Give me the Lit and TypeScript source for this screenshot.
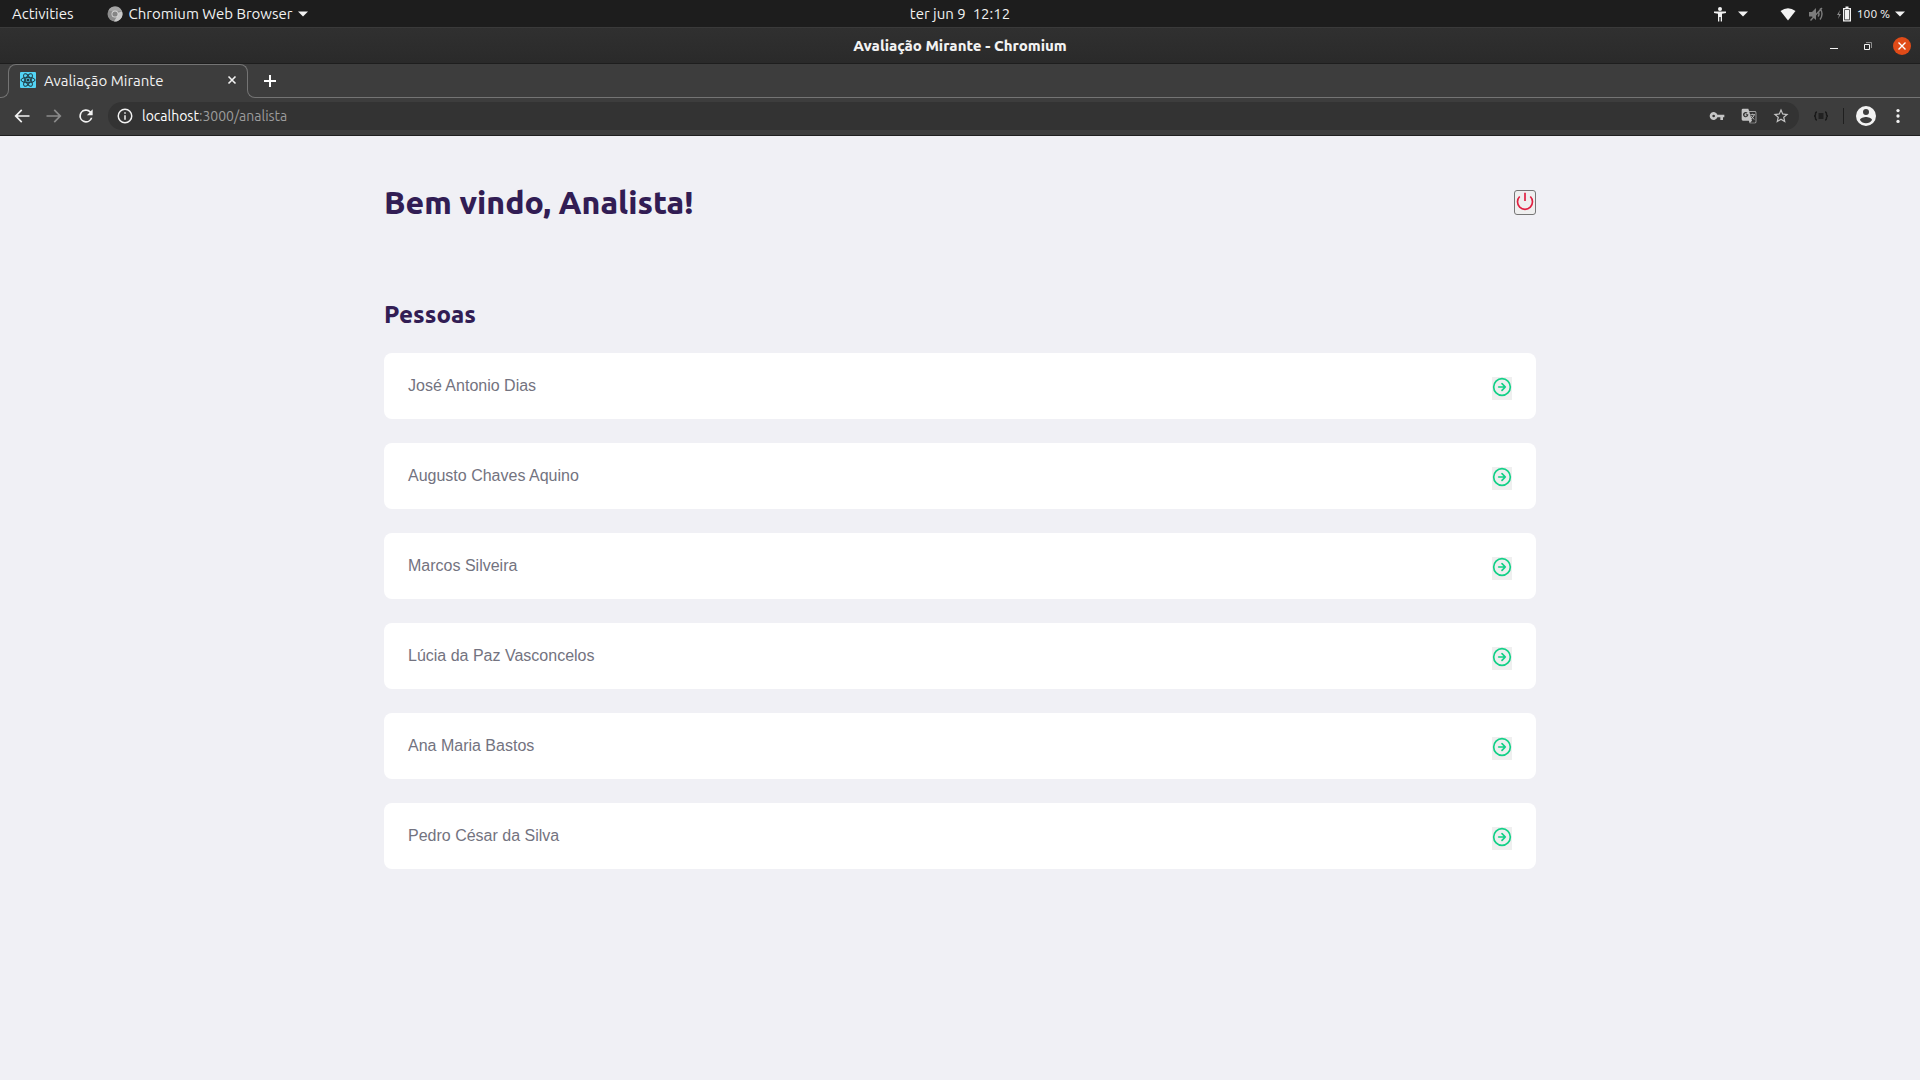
import { LitElement, html, css, svg } from "lit";
import { customElement, property, state } from "lit/decorators.js";

interface Pessoa {
  id: number;
  nome: string;
}

const caret = html`<svg class="caret" viewBox="0 0 10 6" aria-hidden="true"><path d="M0 0.5h10L5 5.5z" /></svg>`;

@customElement("system-bar")
class SystemBar extends LitElement {
  static styles = css`
    :host {
      display: grid;
      grid-template-columns: 1fr auto 1fr;
      align-items: center;
      box-sizing: border-box;
      height: 27px;
      padding: 0 12px;
      background: #1d1d1d;
      color: #f2f2f2;
      font: 15px/27px Ubuntu, "Noto Sans", sans-serif;
    }
    .side {
      display: flex;
      align-items: center;
    }
    .end {
      justify-content: flex-end;
    }
    button {
      display: flex;
      align-items: center;
      margin: 0;
      padding: 0;
      border: 0;
      background: none;
      color: inherit;
      font: inherit;
      white-space: pre;
    }
    .app {
      margin-left: 33px;
      gap: 6px;
    }
    .app svg:first-child {
      width: 16px;
      height: 16px;
    }
    .caret {
      width: 10px;
      height: 6px;
      fill: currentColor;
    }
    .access {
      gap: 10px;
      margin-right: 32px;
    }
    .icon {
      width: 16px;
      height: 16px;
    }
    .status {
      gap: 12px;
      margin-right: 3px;
    }
    .power {
      display: flex;
      align-items: center;
      gap: 5px;
      font-size: 12px;
    }
  `;

  render() {
    return html`
      <div class="side">
        <button type="button">Activities</button>
        <button type="button" class="app">
          <svg viewBox="0 0 16 16" aria-hidden="true">
            <circle cx="8" cy="8" r="7.5" fill="#8c8c8c" />
            <path d="M8 8L15 5.2A7.5 7.5 0 0 1 7 15.4L10.5 9.5z" fill="#c9c9c9" />
            <path d="M1.4 4.6A7.5 7.5 0 0 1 15 5.2H8z" fill="#a5a5a5" />
            <circle cx="8" cy="8" r="3.5" fill="#d6d6d6" />
            <circle cx="8" cy="8" r="2.6" fill="#858585" />
          </svg>
          <span>Chromium Web Browser</span>${caret}
        </button>
      </div>
      <button type="button">ter jun 9  12:12</button>
      <div class="side end">
        <button type="button" class="access" aria-label="Acessibilidade">
          <svg class="icon" viewBox="0 0 16 16" aria-hidden="true" fill="#f2f2f2">
            <circle cx="8" cy="3" r="2" />
            <path d="M2 5.4H14V7L10 7.8V15.500H8.700V11H7.300V15.500H6V7.800L2 7z" />
          </svg>
          ${caret}
        </button>
        <button type="button" class="status" aria-label="Sistema">
          <svg class="icon" viewBox="0 0 16 16" aria-hidden="true">
            <path d="M0.5 5Q8 -0.5 15.5 5L8 14.5z" fill="#f2f2f2" />
          </svg>
          <svg class="icon" viewBox="0 0 16 16" aria-hidden="true" stroke="#7c7c7c" fill="none" stroke-width="1.4">
            <path d="M1 6h3l4-4v12L4 10.500H1z" fill="#7c7c7c" stroke="none" />
            <path d="M10 5.500q2 2.500 0 5M12 2.500q4 5.500 0 11M2.500 14.500L14 2" />
          </svg>
          <span class="power">
            <svg class="icon" viewBox="0 0 16 16" aria-hidden="true">
              <path d="M4 4L1 9h2l-1 4L5 8H3z" fill="#8a8a8a" />
              <path d="M9.500 0.500h3v1.500h2.500v13.500H7V2h2.500z" fill="#f2f2f2" />
              <path d="M8.300 3.300h5.400v11H8.300z" fill="#1d1d1d" />
              <path d="M9 4h4v9.500H9z" fill="#f2f2f2" />
            </svg>
            <span>100 %</span>${caret}
          </span>
        </button>
      </div>
    `;
  }
}

@customElement("browser-chrome")
class BrowserChrome extends LitElement {
  @property() heading = "";
  @property() host = "";
  @property() path = "";

  static styles = css`
    :host {
      display: block;
      color: #f2f2f2;
      background: #3d3d3d;
      font-family: Ubuntu, "Noto Sans", sans-serif;
      border-bottom: 1px solid #1f1f1f;
    }
    button {
      display: grid;
      place-items: center;
      margin: 0;
      padding: 0;
      border: 0;
      background: none;
      color: inherit;
      font: inherit;
    }
    svg {
      display: block;
    }
    .title {
      display: grid;
      grid-template-columns: 1fr auto 1fr;
      align-items: center;
      box-sizing: border-box;
      height: 37px;
      padding: 0 9px;
      background: linear-gradient(#303030, #2a2a2a);
      border-top: 1px solid #3a3a3a;
      border-bottom: 1px solid #1e1e1e;
      font-size: 15px;
      font-weight: 800;
    }
    .controls {
      grid-column: 3;
      display: flex;
      justify-content: flex-end;
      gap: 16px;
    }
    .name {
      grid-column: 2;
    }
    .tabs {
      display: flex;
      height: 34px;
    }
    .edge {
      align-self: flex-end;
      width: 9px;
      height: 24px;
      box-sizing: border-box;
      border: solid #747474;
    }
    .before {
      border-width: 0 1px 1px 0;
      border-bottom-right-radius: 8px;
    }
    .after {
      border-width: 0 0 1px 1px;
      border-bottom-left-radius: 8px;
    }
    .tab {
      display: flex;
      align-items: center;
      box-sizing: border-box;
      width: 240px;
      margin: 0 -1px;
      padding: 0 8px 2px 12px;
      gap: 8px;
      font-size: 15px;
      position: relative;
    }
    .tab::before {
      content: "";
      position: absolute;
      inset: 0 0 auto;
      height: 11px;
      box-sizing: border-box;
      border: solid #747474;
      border-width: 1px 1px 0;
      border-radius: 8px 8px 0 0;
    }
    .label {
      flex: 1;
    }
    .rest {
      flex: 1;
      display: flex;
      align-items: center;
      padding: 0 4px;
      border-bottom: 1px solid #747474;
    }
    .toolbar {
      display: flex;
      align-items: center;
      box-sizing: border-box;
      height: 37px;
      padding: 0 12px 1px;
    }
    .nav {
      display: flex;
      gap: 12px;
      margin-right: 12px;
    }
    .off {
      color: #8a8a8a;
    }
    .omnibox {
      flex: 1;
      display: flex;
      align-items: center;
      height: 28px;
      padding: 0 8px;
      border-radius: 14px;
      background: #333333;
      font-size: 14px;
    }
    .url {
      flex: 1;
      margin-left: 8px;
      color: #9c9c9c;
    }
    .url b {
      font-weight: 400;
      color: #ffffff;
    }
    .tools {
      display: flex;
      gap: 12px;
      color: #c4c4c4;
    }
    .tools button {
      width: 20px;
    }
    .end {
      display: flex;
      align-items: center;
      gap: 10px;
      margin-left: 12px;
    }
    .rule {
      width: 1px;
      height: 16px;
      margin-left: 2px;
      background: #1f1f1f;
    }
  `;

  private icon(body: unknown, size = 20) {
    return html`<svg width=${size} height=${size} viewBox="0 0 24 24" fill="currentColor" aria-hidden="true">${body}</svg>`;
  }

  render() {
    return html`
      <div class="title">
        <span class="name">${this.heading} - Chromium</span>
        <div class="controls">
          <button type="button" aria-label="Minimizar">
            <svg width="18" height="18" viewBox="0 0 18 18"><path d="M5 11.500h8" stroke="#f2f2f2" /></svg>
          </button>
          <button type="button" aria-label="Restaurar">
            <svg width="18" height="18" viewBox="0 0 18 18" fill="none">
              <path d="M7 5.500h5.500V11" stroke="#8e8e8e" />
              <path d="M5.500 7.500h5v5h-5z" stroke="#f2f2f2" />
            </svg>
          </button>
          <button type="button" aria-label="Fechar janela">
            <svg width="18" height="18" viewBox="0 0 18 18">
              <circle cx="9" cy="9" r="9" fill="#e04b18" />
              <path d="M5.500 5.500l7 7M12.500 5.500l-7 7" stroke="#fff" stroke-width="1.400" />
            </svg>
          </button>
        </div>
      </div>
      <div class="tabs">
        <div class="edge before"></div>
        <div class="tab">
          <svg width="16" height="16" viewBox="0 0 16 16" aria-hidden="true">
            <rect width="16" height="16" rx="1" fill="#53d4f5" />
            <g fill="none" stroke="#203a43">
              <ellipse cx="8" cy="8" rx="7" ry="2.700" />
              <ellipse cx="8" cy="8" rx="7" ry="2.700" transform="rotate(60 8 8)" />
              <ellipse cx="8" cy="8" rx="7" ry="2.700" transform="rotate(120 8 8)" />
            </g>
            <circle cx="8" cy="8" r="1.500" fill="#203a43" />
          </svg>
          <span class="label">${this.heading}</span>
          <button type="button" aria-label="Fechar aba">
            <svg width="16" height="16" viewBox="0 0 16 16"><path d="M4.500 4.500l7 7M11.500 4.500l-7 7" stroke="#f2f2f2" stroke-width="1.600" /></svg>
          </button>
        </div>
        <div class="edge after"></div>
        <div class="rest">
          <button type="button" aria-label="Nova aba">
            <svg width="20" height="20" viewBox="0 0 20 20"><path d="M4 10h12M10 4v12" stroke="#fff" stroke-width="2" /></svg>
          </button>
        </div>
      </div>
      <div class="toolbar">
        <div class="nav">
          <button type="button" aria-label="Voltar">
            ${this.icon(svg`<path d="M21 11H6.830l5.580-5.590L11 4l-8 8 8 8 1.410-1.410L6.830 13H21z"/>`)}
          </button>
          <button type="button" class="off" aria-label="Avançar" disabled>
            ${this.icon(svg`<path d="M3 11h14.170l-5.580-5.590L13 4l8 8-8 8-1.410-1.410L17.170 13H3z"/>`)}
          </button>
          <button type="button" aria-label="Recarregar">
            ${this.icon(svg`<path d="M17.650 6.350A8 8 0 1 0 19.730 14h-2.080A6 6 0 1 1 12 6c1.660 0 3.140.69 4.220 1.780L13 11h7V4z"/>`)}
          </button>
        </div>
        <div class="omnibox">
          ${this.icon(svg`<path d="M11 7h2v2h-2zm0 4h2v6h-2zm1-9a10 10 0 1 0 0 20 10 10 0 0 0 0-20zm0 18a8 8 0 1 1 0-16 8 8 0 0 1 0 16z"/>`, 18)}
          <span class="url"><b>${this.host}</b>${this.path}</span>
          <div class="tools">
            <button type="button" aria-label="Senhas">
              ${this.icon(svg`<path d="M12.650 10A6 6 0 1 0 12.650 14H17v4h4v-4h2v-4zM7 14a2 2 0 1 1 0-4 2 2 0 0 1 0 4z"/>`, 16)}
            </button>
            <button type="button" aria-label="Traduzir">
              ${this.icon(svg`<path fill-rule="evenodd" d="M3 1h8l1.200 4H21a2 2 0 0 1 2 2v14a2 2 0 0 1-2 2h-8l-1.200-4H3a2 2 0 0 1-2-2V3a2 2 0 0 1 2-2zM12.500 6l4 13-3 3H21a1 1 0 0 0 1-1V7a1 1 0 0 0-1-1z"/><path d="M11 9.500H7.200v1.600h2.100A2.200 2.200 0 1 1 8.600 8.200L9.800 7A4 4 0 1 0 11 9.500z" fill="#333"/><path d="M14 10h7M17.500 8.500V10M20 10q-1 4-5 6.500M15.500 12q1.500 3.500 4.500 5" stroke="currentColor" stroke-width="1.300" fill="none"/>`, 16)}
            </button>
            <button type="button" aria-label="Favoritar">
              ${this.icon(svg`<path d="M22 9.240l-7.190-.62L12 2 9.190 8.630 2 9.240l5.460 4.730L5.820 21 12 17.270 18.180 21l-1.630-7.030zM12 15.400l-3.760 2.270 1-4.280-3.320-2.880 4.380-.38L12 6.100l1.710 4.040 4.380.38-3.320 2.880 1 4.280z"/>`, 18)}
            </button>
          </div>
        </div>
        <div class="end">
          <button type="button" aria-label="Extensão">
            <svg width="20" height="20" viewBox="0 0 20 20" fill="none" stroke="#191919" stroke-width="1.400" aria-hidden="true">
              <path d="M6 6Q4.500 6 4.500 8T3 10Q4.500 10 4.500 12T6 14M14 6Q15.500 6 15.500 8T17 10Q15.500 10 15.500 12T14 14M7.500 8h5M7.500 10h5M7.500 12h5" />
            </svg>
          </button>
          <span class="rule"></span>
          <button type="button" aria-label="Perfil">
            ${this.icon(svg`<path d="M12 2a10 10 0 1 0 0 20 10 10 0 0 0 0-20zm0 3a3 3 0 1 1 0 6 3 3 0 0 1 0-6zm0 14.200a7.200 7.200 0 0 1-6-3.220c.03-1.990 4-3.080 6-3.080s5.970 1.090 6 3.080a7.200 7.200 0 0 1-6 3.220z"/>`, 24)}
          </button>
          <button type="button" aria-label="Menu">
            ${this.icon(svg`<circle cx="12" cy="5.500" r="2"/><circle cx="12" cy="12" r="2"/><circle cx="12" cy="18.500" r="2"/>`)}
          </button>
        </div>
      </div>
    `;
  }
}

@customElement("app-root")
class AppRoot extends LitElement {
  @state() private pessoas: Pessoa[] = [
    { id: 1, nome: "José Antonio Dias" },
    { id: 2, nome: "Augusto Chaves Aquino" },
    { id: 3, nome: "Marcos Silveira" },
    { id: 4, nome: "Lúcia da Paz Vasconcelos" },
    { id: 5, nome: "Ana Maria Bastos" },
    { id: 6, nome: "Pedro César da Silva" },
  ];

  static styles = css`
    :host {
      display: flex;
      flex-direction: column;
      min-height: 100vh;
      background: #f0f0f5;
    }
    main {
      box-sizing: border-box;
      width: 100%;
      max-width: 1216px;
      margin: 0 auto;
      padding: 32px;
    }
    header {
      display: flex;
      align-items: center;
      justify-content: space-between;
      height: 68px;
    }
    h1,
    h2 {
      margin: 0;
      color: #321d54;
      font-family: Ubuntu, "Noto Sans", sans-serif;
      font-weight: 800;
    }
    h1 {
      font-size: 32px;
      line-height: 40px;
    }
    h2 {
      margin-top: 63px;
      font-size: 24px;
      line-height: 32px;
    }
    ul {
      display: flex;
      flex-direction: column;
      gap: 24px;
      margin: 22px 0 0;
      padding: 0;
      list-style: none;
    }
    li {
      display: flex;
      align-items: flex-start;
      justify-content: space-between;
      padding: 24px 24px 19px;
      border-radius: 8px;
      background: #ffffff;
      color: #737380;
      font: 16px/18px "Liberation Sans", Arial, sans-serif;
    }
    button {
      display: block;
      box-sizing: border-box;
      margin: 0;
      cursor: pointer;
    }
    svg {
      display: block;
    }
    .logout {
      width: 22px;
      height: 25px;
      padding: 0 0 3px;
      border: 1px solid #767676;
      border-radius: 3px;
      background: #efefef;
      color: #e02041;
    }
    .open {
      width: 20px;
      height: 23px;
      padding: 0;
      border: 0;
      background: #efefef;
      color: #11d087;
    }
    .open svg {
      margin-bottom: 3px;
    }
  `;

  render() {
    return html`
      <system-bar></system-bar>
      <browser-chrome heading="Avaliação Mirante" host="localhost" path=":3000/analista"></browser-chrome>
      <main>
        <header>
          <h1>Bem vindo, Analista!</h1>
          <button type="button" class="logout" aria-label="Sair">
            <svg width="20" height="20" viewBox="0 0 24 24" fill="none" stroke="currentColor" stroke-width="2" aria-hidden="true">
              <path d="M18.360 6.640a9 9 0 1 1-12.730 0M12 2v10" />
            </svg>
          </button>
        </header>
        <h2>Pessoas</h2>
        <ul>
          ${this.pessoas.map(
            (pessoa) => html`
              <li>
                <span>${pessoa.nome}</span>
                <button type="button" class="open" aria-label="Abrir ${pessoa.nome}">
                  <svg width="20" height="20" viewBox="0 0 24 24" fill="none" stroke="currentColor" stroke-width="2" stroke-linecap="round" stroke-linejoin="round" aria-hidden="true">
                    <circle cx="12" cy="12" r="10" />
                    <path d="M12 16l4-4-4-4M8 12h8" />
                  </svg>
                </button>
              </li>
            `
          )}
        </ul>
      </main>
    `;
  }
}
